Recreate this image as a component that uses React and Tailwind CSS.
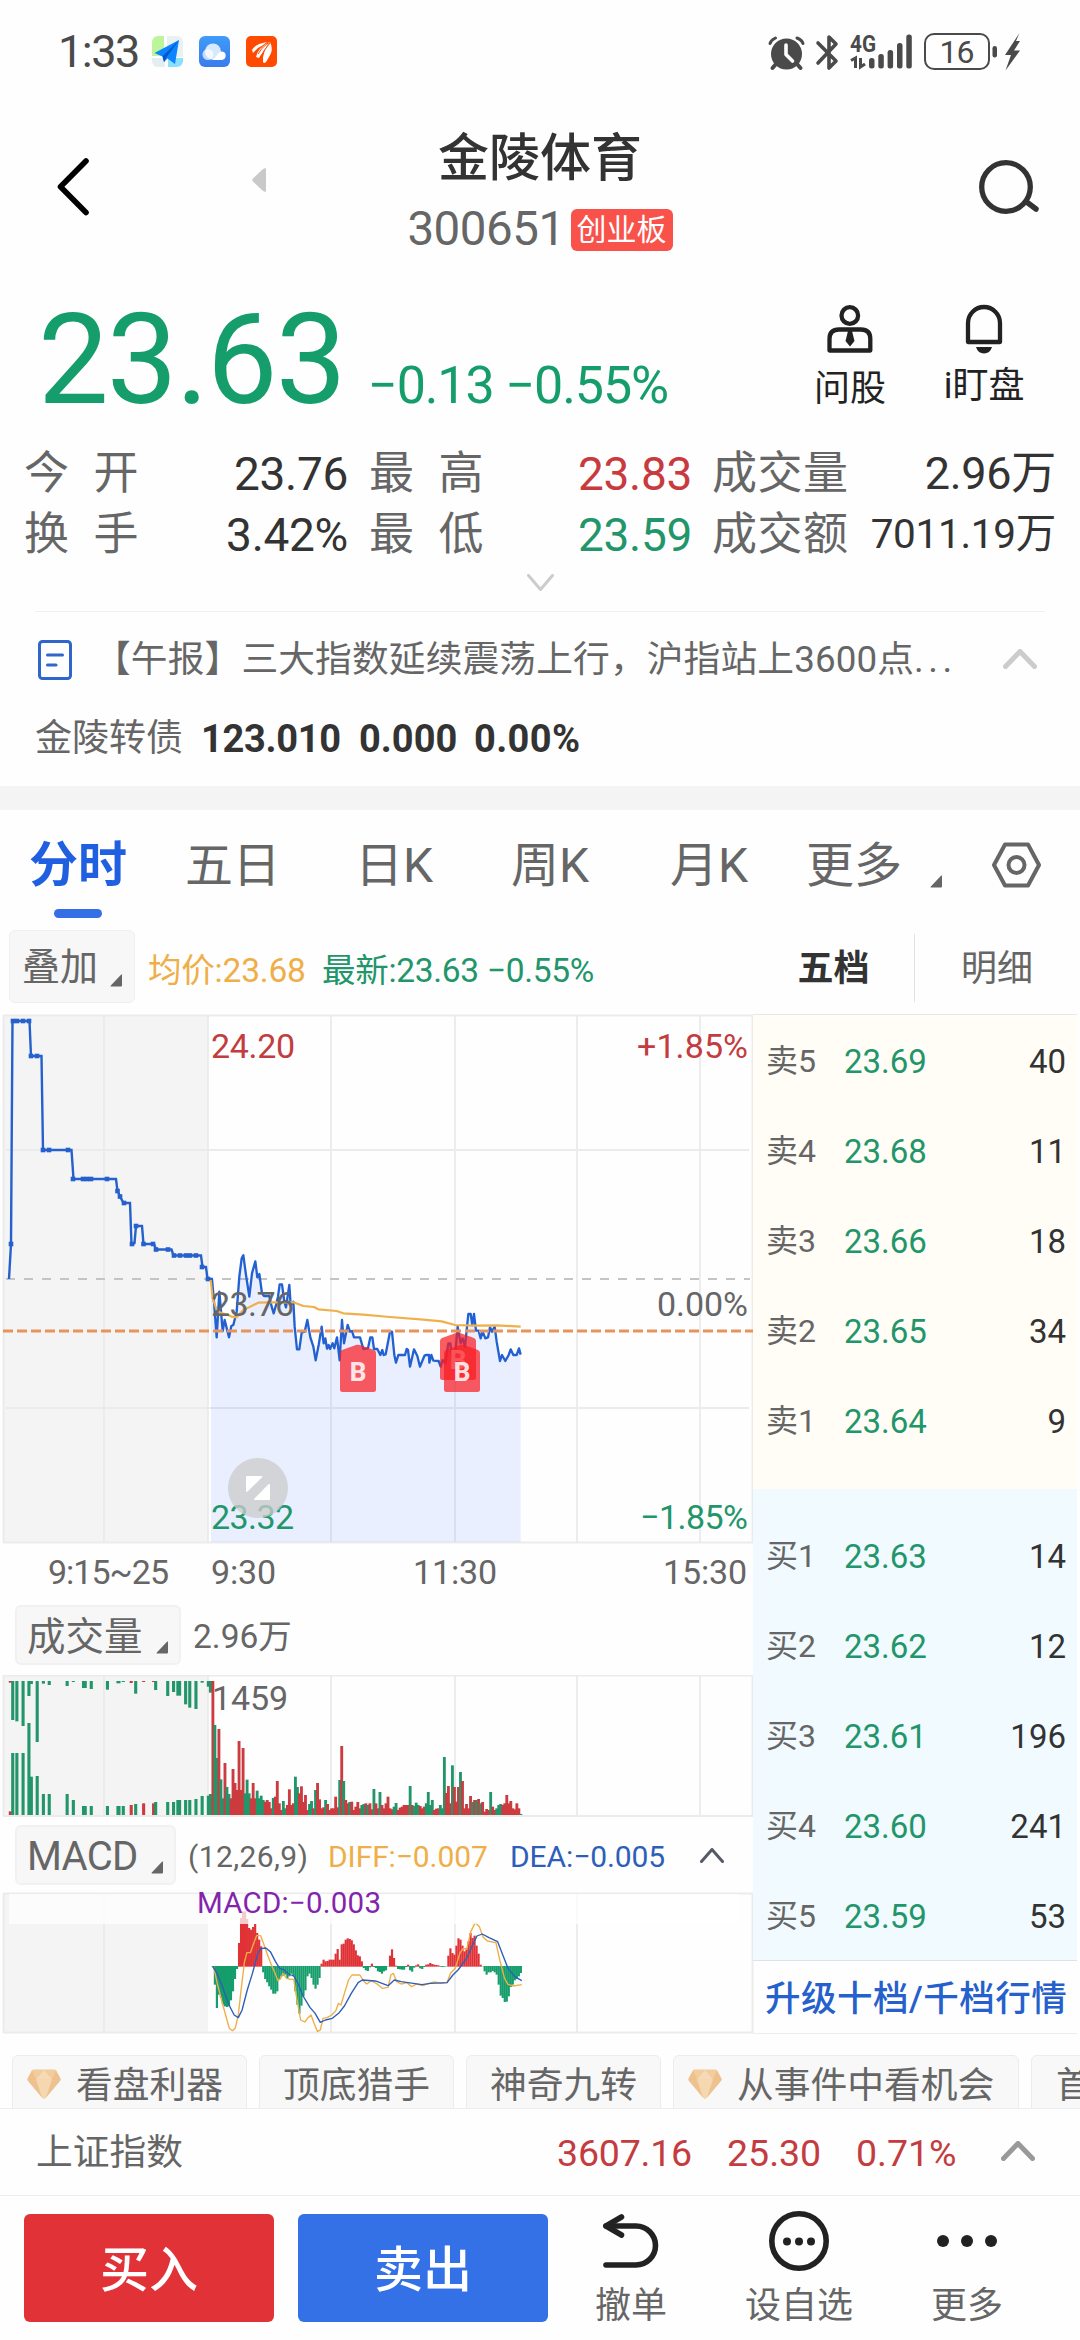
import React from "react";

const FONT = "font-[Roboto,'Noto_Sans_CJK_SC',sans-serif]";

const VOL_UP = "#cc3b3f";
const VOL_DOWN = "#22966a";

/* ---------- chart data ---------- */

const AUCTION =
  "9,1279 11,1244 12.5,1021 29.5,1021 31,1056 41.5,1056 43,1150 71.5,1150 73.5,1179 116,1179 117.5,1191 120,1196.5 123.5,1203 130,1203 131.5,1244 134.5,1243 136,1226 142,1226 143.5,1244 154,1244 156,1249.5 171.5,1249.5 173.5,1255.5 201,1255.5 202.5,1267 206,1267 207.5,1279 213,1279";

const AUCTION_DOTS = [
  [11, 1244], [13, 1021], [17, 1021], [23, 1021], [29, 1021], [31, 1056], [37, 1056], [43, 1150], [49, 1150], [68, 1150],
  [73, 1179], [83, 1179], [87, 1179], [91, 1179], [107, 1179], [117.5, 1191], [120, 1196.5], [124, 1203], [132, 1244],
  [136, 1226], [143.5, 1244], [153, 1244], [156, 1249.5], [168, 1249.5], [174, 1255.5], [180, 1255.5], [186, 1255.5],
  [190, 1255.5], [196, 1255.5], [202, 1267], [208, 1279],
];

const PRICE =
  "66,147 72,215 80,322 88,185 98,303 104,270 117,322 124,288 130,285 140,245 148,140 155,85 160,76 168,135 178,200 186,130 196,94 202,142 208,132 216,190 222,198 238,198 245,230 251,250 258,225 264,200 269,163 276,163 283,215 288,232 298,165 302,225 310,215 314,290 321,358 328,358 335,308 344,305 352,270 361,322 370,350 377,391 386,345 395,290 401,340 406,325 411,356 416,345 420,357 428,340 433,355 441,322 449,391 456,270 462,340 473,285 480,305 486,303 492,322 510,322 520,357 534,355 541,322 547,322 552,357 562,357 571,375 577,360 581,375 587,373 600,305 606,305 613,375 618,398 625,375 645,375 650,357 654,360 660,410 672,358 682,378 690,410 703,378 707,375 717,375 718,398 724,375 730,392 746,393 752,410 758,390 766,400 775,340 781,340 788,400 795,380 803,290 812,340 818,325 825,350 830,300 835,252 842,252 847,285 852,252 858,302 866,302 872,325 878,305 886,325 894,322 900,292 906,305 914,290 920,335 930,393 936,375 946,393 956,375 962,358 970,375 980,375 987,355 992,374";

const AVERAGE =
  "62,150 68,205 80,240 95,250 110,253 125,260 140,262 160,240 185,228 205,218 235,217 310,217 340,228 372,231 385,238 440,243 460,250 520,254 600,261 700,269 755,274 795,285 850,287 920,286 992,290";

/* [x, top bar end, bottom bar start, rising, width] */
const AUCTION_VOLUME = [
  [30, 278, 664, 1], [37, 390, 489], [49, 394, 489], [67, 408, 489], [84, 318, 399], [91, 282, 560], [108, 456, 558],
  [126, 281, 612], [143, 285, 612], [195, 288, 612], [213, 276, 630], [245, 294, 648, 0, 14], [265, 297, 648],
  [312, 299, 648], [344, 280, 648, 0, 12], [358, 276, 648], [381, 279, 645, 1], [394, 311, 642], [417, 276, 640, 1],
  [446, 276, 640, 1], [452, 300, 636], [487, 318, 636], [504, 306, 636], [519, 317, 630, 0, 14], [539, 343, 630],
  [551, 353, 630], [569, 357, 627], [587, 278, 618], [605, 290, 617], [611, 308, 612],
];

/* positive: rising minute, negative: falling minute */
const VOLUME = [
  402, -270, -171, 258, -107, -50, 156, -84, -63, 50, 138, 96, 75, 222, 75, 201, -65, -106, -65, 50, 96, 50, -73, -50, -58,
  -45, 40, 45, 39, 20, -51, 55, 102, 35, 15, -42, -20, 30, 77, 30, 35, -115, -84, 65, 86, 39, 60, 15, -33, -42, 20, -75, 96,
  47, 20, 23, -45, 33, 15, 20, 20, 55, 23, -105, 207, -102, 45, 35, -39, 40, 15, 25, 39, 20, -30, -33, 35, -30, 35, 17, -78,
  35, 20, -69, 30, 20, 35, 55, 20, 17, -25, -36, 15, 22, 25, 30, 30, 30, -87, 30, -27, -37, -30, 27, 20, 25, -35, -69, -30,
  -45, 15, 19, 20, -30, -20, -174, 66, 87, 35, -149, 84, 40, 84, -129, 102, 20, 33, 20, 57, -39, 45, -45, 48, -35, 39, 10, 18,
  15, -69, 25, 15, -20, -30, -33, 30, 35, 60, 35, 42, 20, 17, 35, 20, -3,
];

const HIST = [
  -3, -55, -125, -85, -95, -115, -120, -122, -120, -102, -75, -38, -8, 70, 145, 165, 165, 142, 115, 110, 118, 127, 100, 80, 60,
  -18, -38, -48, -60, -70, -82, -82, -75, -40, -30, -28, -25, -38, -30, -22, -30, -75, -115, -142, -118, -90, -72, -30, -22, -35,
  -55, -67, -55, -35, 8, 20, 15, 16, 20, 20, 20, 38, 52, 20, 66, 68, 80, 84, 82, 78, 66, 48, 33, 30, 15, -5, -12, -14, -3, 8, -2,
  -5, -15, -17, -22, -15, -12, 0, 32, 51, 25, 2, -8, -9, -10, -10, -2, 5, -12, -16, -4, 3, 6, -6, -8, -2, 5, 6, 10, 7, 5, 4, 3, -1,
  -2, -1, 0, 32, 54, 40, 35, 62, 84, 80, 62, 45, 55, 75, 100, 85, 92, 62, 38, 5, 0, -15, -25, -18, -18, -14, -18, -25, -55, -88,
  -95, -107, -106, -90, -62, -55, -42, -38, -30, -20,
];

const DIFF =
  "620,1129 632,1185 642,1225 655,1275 666,1315 675,1322 683,1315 692,1275 700,1200 710,1115 717,1088 727,1088 735,1065 745,1037 757,1037 765,1060 775,1090 788,1125 797,1145 807,1172 815,1165 822,1150 832,1165 843,1168 853,1168 860,1215 873,1290 885,1296 893,1285 903,1275 912,1300 922,1325 930,1320 938,1285 950,1283 963,1275 975,1262 983,1240 990,1245 1000,1210 1012,1170 1022,1155 1045,1155 1055,1172 1065,1182 1078,1172 1095,1182 1110,1195 1127,1192 1135,1155 1142,1150 1152,1175 1165,1182 1182,1178 1195,1190 1210,1182 1228,1187 1245,1180 1262,1176 1280,1180 1298,1178 1308,1150 1322,1135 1335,1090 1345,1075 1355,1078 1367,1025 1380,998 1392,1010 1402,1040 1415,1053 1440,1058 1450,1105 1465,1165 1475,1183 1490,1188 1515,1184";

const DEA =
  "618,1129 630,1150 645,1188 665,1245 680,1275 692,1283 703,1260 718,1200 733,1150 748,1092 757,1076 772,1074 785,1085 800,1115 812,1135 825,1140 838,1152 853,1158 865,1180 880,1218 900,1252 915,1270 930,1297 945,1290 965,1285 985,1268 1000,1248 1020,1210 1040,1178 1052,1170 1090,1173 1127,1187 1145,1170 1165,1175 1200,1180 1225,1184 1250,1180 1298,1178 1315,1155 1330,1140 1355,1105 1370,1070 1385,1038 1400,1032 1420,1043 1445,1055 1460,1095 1475,1135 1495,1160 1515,1172";

const SELLS = [["卖5", "23.69", "40"], ["卖4", "23.68", "11"], ["卖3", "23.66", "18"], ["卖2", "23.65", "34"], ["卖1", "23.64", "9"]];
const BUYS = [["买1", "23.63", "14"], ["买2", "23.62", "12"], ["买3", "23.61", "196"], ["买4", "23.60", "241"], ["买5", "23.59", "53"]];

/* ---------- small parts ---------- */

function Corner() {
  return (
    <svg width="13" height="13" viewBox="0 0 13 13" className="shrink-0">
      <path d="M12 0.5V11.5Q12 12.5 11 12.5H1Q0 12.3 0.8 11.4L11 0.8Q12 0 12.3 0.8Z" fill="#666" />
    </svg>
  );
}

function Chevron({ w, h, color, sw, down }) {
  const p = down ? `${sw / 2},${sw / 2} ${w / 2},${h - sw / 2} ${w - sw / 2},${sw / 2}` : `${sw / 2},${h - sw / 2} ${w / 2},${sw / 2} ${w - sw / 2},${h - sw / 2}`;
  return (
    <svg width={w} height={h} viewBox={`0 0 ${w} ${h}`} className="shrink-0">
      <polyline points={p} fill="none" stroke={color} strokeWidth={sw} strokeLinecap="round" strokeLinejoin="round" />
    </svg>
  );
}

function Gem() {
  return (
    <svg width="34" height="30" viewBox="0 0 34 30" className="shrink-0">
      <path d="M7 0.5H27Q28.5 0.5 29.3 1.8L33.3 9Q34 10.5 33 11.8L19 28.6Q17 30.8 15 28.6L1 11.8Q0 10.5 0.7 9L4.7 1.8Q5.5 0.5 7 0.5Z" fill="#f2cc9c" />
      <path d="M0.5 10.5H33.5L33 11.8L19 28.6Q17 30.8 15 28.6L1 11.8Z" fill="#f5d7b0" />
      <path d="M0.5 10.5L5 1.5L9 10.5L15 28.6L1 11.8Z" fill="#ebbd88" opacity=".8" />
      <path d="M33.5 10.5L29 1.5L25 10.5L19 28.6L33 11.8Z" fill="#ebbd88" opacity=".8" />
      <path d="M9 10.5L17 1L25 10.5Z" fill="#f6d9b6" />
    </svg>
  );
}

function Label({ x, y, w, size = 34, fill = "#666", children }) {
  return (
    <text x={x} y={y} textLength={w} fontSize={size} fill={fill}>
      {children}
    </text>
  );
}

function Marker({ x, y }) {
  return (
    <g>
      <path
        d={`M${x} ${y + 8.5}Q${x} ${y + 6.5} ${x + 2} ${y + 5.5}L${x + 16} ${y + 0.6}Q${x + 18} ${y - 0.3} ${x + 20} ${y + 0.6}L${x + 34} ${y + 5.5}Q${x + 36} ${y + 6.5} ${x + 36} ${y + 8.5}V${y + 45}Q${x + 36} ${y + 47.5} ${x + 33.5} ${y + 47.5}H${x + 2.5}Q${x} ${y + 47.5} ${x} ${y + 45}Z`}
        fill="#fa1d22"
        fillOpacity=".72"
      />
      <text x={x + 18} y={y + 36.5} textAnchor="middle" fontSize="26" fontWeight="800" fill="#fff" fillOpacity=".85">
        B
      </text>
    </g>
  );
}

/* ---------- sections ---------- */

function StatusBar() {
  return (
    <div className="flex h-[105px] items-center pr-[58px] pb-[2px] pl-[58px] text-[#4a4a4a]">
      <span className="w-[94px] text-[45px] leading-none tracking-[-1.500px]">1:33</span>
      <svg width="125" height="31" viewBox="0 0 125 31">
        <defs>
          <clipPath id="tile"><rect width="31" height="31" rx="6" /></clipPath>
          <linearGradient id="sky" x1="0" y1="0" x2="0" y2="1">
            <stop offset="0" stopColor="#3f9bf7" />
            <stop offset="1" stopColor="#3a7bee" />
          </linearGradient>
        </defs>
        <g clipPath="url(#tile)">
          <rect width="31" height="31" fill="#fff" />
          <rect width="12" height="20" fill="#bdf59a" />
          <rect x="15" width="16" height="21" fill="#e9f1f2" />
          <rect y="22" width="13" height="9" fill="#e4edf2" />
          <rect x="16" y="22" width="15" height="9" fill="#8de0fb" />
          <path d="M27 4L2.5 17L10.5 20.5L12 26L15.5 22.5L23 28Z" fill="#0a84ff" />
          <path d="M27 4L10.5 20.5L12 26L14 22Z" fill="#0556c4" />
        </g>
        <rect x="47" width="31" height="31" rx="6" fill="url(#sky)" />
        <g fill="#fff">
          <circle cx="61" cy="15.5" r="8" opacity=".8" />
          <circle cx="56" cy="18.5" r="5.5" opacity=".7" />
          <path d="M58 24Q62 24 65 19Q68 14 72 16A4.5 4.5 0 0 1 70 24Z" />
        </g>
        <rect x="94" width="31" height="31" rx="5" fill="#ff4a00" />
        <g fill="#fff">
          <path d="M100 14Q103 8 115 6Q110 10 106 12Q103 15 101 17Z" />
          <path d="M104 21Q106 12 117 6Q114 12 111 16Q108 20 107 22Z" />
          <path d="M111 26Q110 16 118 6Q122 14 117 21L114 26Q112 28 111 26Z" />
        </g>
        <path d="M106 18Q109 12 116 7M109 23Q111 14 118 7" stroke="#ff4a00" strokeWidth="1" fill="none" />
      </svg>
      <svg width="254" height="48" viewBox="768 27 254 48" className="ml-auto">
        <g fill="#4a4a4a">
          <circle cx="786.500" cy="53" r="15.500" />
          <path d="M776 63L772.500 67M797 63L800.500 67" stroke="#4a4a4a" strokeWidth="4" strokeLinecap="round" />
          <path d="M770 42.500Q771 39 775.500 37M803 42.500Q802 39 797 37" stroke="#4a4a4a" strokeWidth="3" strokeLinecap="round" fill="none" />
          <path d="M786 44V53.500L792.500 60" stroke="#fff" strokeWidth="3.600" strokeLinecap="round" strokeLinejoin="round" fill="none" />
        </g>
        <path d="M818 42L836 60L829 67V36L836 43L818 62" fill="none" stroke="#4a4a4a" strokeWidth="3.600" strokeLinejoin="round" strokeLinecap="round" />
        <text x="850" y="51" fontSize="23" fontWeight="700" fill="#4a4a4a" textLength="26" lengthAdjust="spacingAndGlyphs">4G</text>
        <path d="M851 59.500L855.500 57V67M860.500 57V66L865 63" fill="none" stroke="#4a4a4a" strokeWidth="3" />
        <g fill="#4a4a4a">
          <rect x="869" y="57" width="5.500" height="10.500" rx="2.500" />
          <rect x="878.300" y="53" width="5.500" height="14.500" rx="2.500" />
          <rect x="887.600" y="49" width="5.500" height="18.500" rx="2.500" />
          <rect x="897" y="42" width="5.500" height="25.500" rx="2.500" />
          <rect x="906.300" y="33.500" width="5.500" height="34" rx="2.500" />
          <rect x="992.500" y="45" width="4.500" height="11.500" rx="2.200" />
          <path d="M1019.500 32L1005 54H1011L1005.500 69.500L1020 49.500H1014L1020 40H1016Z" />
        </g>
        <rect x="925" y="33" width="64" height="35" rx="9" fill="none" stroke="#4a4a4a" strokeWidth="2" />
        <text x="939.500" y="62" fontSize="32" fill="#4a4a4a" textLength="35">16</text>
      </svg>
    </div>
  );
}

function Header() {
  return (
    <div className="flex h-[163px] items-center justify-between">
      <div className="flex w-[270px] items-center pl-[57px]">
        <svg width="34" height="60" viewBox="0 0 34 60">
          <polyline points="29,4 3.500,29.800 29,55.500" fill="none" stroke="#000" strokeWidth="5.600" strokeLinecap="round" strokeLinejoin="round" />
        </svg>
        <svg width="14" height="24" viewBox="0 0 14 24" className="mt-[-14px] ml-[161px]">
          <path d="M14 0V24L11 23L0.500 13Q0 12 0.500 11L11 1Z" fill="#c9c9c9" />
        </svg>
      </div>
      <div className="mt-[20px] flex flex-col items-center self-start">
        <div className="h-[64px] text-[51px] leading-[67px] font-medium text-[#333]">金陵体育</div>
        <div className="flex h-[82px] items-center gap-[6px]">
          <span className="text-[47.500px] leading-none tracking-[-0.500px] text-[#666]">300651</span>
          <span className="h-[42px] w-[102px] rounded-[6px] bg-[#f8524a] text-center text-[30px] leading-[42px] whitespace-nowrap text-white">创业板</span>
        </div>
      </div>
      <div className="flex w-[270px] justify-end pr-[41px]">
        <svg width="62" height="56" viewBox="976 158 62 56">
          <circle cx="1005" cy="186" r="24.300" fill="none" stroke="#333" strokeWidth="5.300" />
          <path d="M1025 200.500L1035 208" stroke="#333" strokeWidth="5.500" strokeLinecap="round" />
        </svg>
      </div>
    </div>
  );
}

function PriceBlock() {
  return (
    <div className="flex h-[175px] justify-between pr-[56px] pl-[38px]">
      <div className="mt-[29px] flex items-baseline self-start text-[#159e6b]">
        <span className="w-[330px] text-[126px] leading-none tracking-[-2px]">23.63</span>
        <span className="text-[52px] leading-none tracking-[-1.100px] whitespace-nowrap">−0.13 −0.55%</span>
      </div>
      <div className="mt-[35px] flex gap-[58px] text-[#222]">
        <div className="flex w-[72px] flex-col items-center">
          <svg width="46" height="52" viewBox="825 303 46 52">
            <circle cx="847.800" cy="315.500" r="8.300" fill="none" stroke="#222" strokeWidth="4.300" />
            <path d="M827.500 350.500V339Q827.500 329.500 837 329.500H859Q868.300 329.500 868.300 339V350.500Z" fill="none" stroke="#222" strokeWidth="4.300" strokeLinejoin="round" />
            <path d="M846 331H850L852.500 341L848 346.500L843.500 341Z" fill="#222" />
          </svg>
          <span className="mt-[12px] text-[36px] leading-[44px] whitespace-nowrap">问股</span>
        </div>
        <div className="flex w-[80px] flex-col items-center">
          <svg width="46" height="52" viewBox="959 303 46 52">
            <path d="M966 342V323A16 16 0 0 1 998 323V342Z" fill="none" stroke="#222" strokeWidth="4.300" strokeLinejoin="round" />
            <path d="M974 347H990Q988 353.500 982 353.500Q976 353.500 974 347Z" fill="#222" />
          </svg>
          <span className="mt-[9px] text-[36px] leading-[44px] whitespace-nowrap">i盯盘</span>
        </div>
      </div>
    </div>
  );
}

function StatRow({ a, av, b, bv, bc, c, cv, cs }) {
  return (
    <div className="flex h-[61px] items-center pl-[24px] text-[46px] leading-none tracking-[-0.300px] whitespace-nowrap">
      <span className="w-[122px] text-[45px] tracking-[24.500px] text-[#666]">{a}</span>
      <span className="w-[202px] text-right text-[#333]">{av}</span>
      <span className="ml-[21px] w-[140px] text-[45px] tracking-[24.500px] text-[#666]">{b}</span>
      <span className={"w-[183px] text-right " + bc}>{bv}</span>
      <span className="ml-[20px] w-[145px] text-[45px] tracking-[0.500px] text-[#666]">{c}</span>
      <span className={"w-[199px] text-right text-[#333] " + cs}>{cv}</span>
    </div>
  );
}

function News() {
  return (
    <>
      <div className="flex h-[46px] items-start justify-center pt-[9px]">
        <Chevron w={27} h={17} color="#ccc" sw={3} down />
      </div>
      <div className="mx-[35px] h-px bg-[#efefef]" />
      <div className="flex h-[94px] items-center pl-[37px]">
        <svg width="36" height="42" viewBox="0 0 36 42" className="mt-[2px]">
          <rect x="2.500" y="2.500" width="31" height="37" rx="3" fill="none" stroke="#2f66cc" strokeWidth="3" />
          <path d="M10.500 16H25.500M10.500 26H19" stroke="#2f66cc" strokeWidth="3" strokeLinecap="round" />
        </svg>
        <span className="mt-[2px] ml-[21px] w-[880px] text-[36.750px] leading-none tracking-[0.100px] whitespace-nowrap text-[#666]">
          【午报】三大指数延续震荡上行，沪指站上3600点<span className="tracking-[4.500px]">...</span>
        </span>
        <span className="ml-[29px]"><Chevron w={34} h={20} color="#ccc" sw={5} /></span>
      </div>
      <div className="flex h-[80px] items-start pl-[35px] text-[37px] leading-[66px] whitespace-nowrap">
        <span className="w-[166px] text-[#666]">金陵转债</span>
        <span className="w-[158px] text-[38px] font-bold tracking-[-0.300px] text-[#333]">123.010</span>
        <span className="w-[115px] text-[38px] font-bold text-[#333]">0.000</span>
        <span className="text-[38px] font-bold tracking-[0.400px] text-[#333]">0.00%</span>
      </div>
      <div className="h-[24px] bg-[#f4f4f4]" />
    </>
  );
}

function Tabs() {
  return (
    <div className="flex h-[109px] items-center text-[48px] leading-none whitespace-nowrap text-[#666]">
      <div className="relative flex h-full w-[156px] items-center justify-center pt-[2px] text-[49px] font-bold text-[#1f5fe0]">
        分时
        <span className="absolute bottom-[1px] left-[54px] h-[9px] w-[48px] rounded-full bg-[#346fe6]" />
      </div>
      <span className="mt-[2px] w-[153px] text-center tracking-[-0.500px]">五日</span>
      <span className="mt-[2px] w-[170px] text-center">日K</span>
      <span className="mt-[2px] w-[142px] text-center">周K</span>
      <span className="mt-[2px] w-[176px] text-center">月K</span>
      <span className="mt-[2px] ml-[9px] w-[124px]">更多</span>
      <span className="mt-[33px]"><Corner /></span>
      <svg width="51" height="46" viewBox="0 0 51 46" className="ml-[48px]">
        <path d="M14 2.500H37L48 23L37 43.500H14L3 23Z" fill="none" stroke="#666" strokeWidth="4" strokeLinejoin="round" />
        <circle cx="25.500" cy="23" r="8" fill="none" stroke="#666" strokeWidth="4" />
      </svg>
    </div>
  );
}

function InfoRow() {
  return (
    <div className="flex h-[95px] items-center pl-[9px] text-[33.500px] leading-none whitespace-nowrap">
      <div className="flex h-[73px] w-[126px] items-center rounded-[6px] border border-[#efefef] bg-[#f7f7f7] pl-[12px] text-[38px] text-[#666]">
        叠加
        <span className="mt-[28px] ml-[12px]"><Corner /></span>
      </div>
      <span className="mt-[8px] ml-[13px] w-[174px] tracking-[-0.200px] text-[#efae48]">均价:23.68</span>
      <span className="mt-[8px] w-[431px] tracking-[-0.300px] text-[#22966a]">最新:23.63 −0.55%</span>
      <div className="mt-[3px] flex h-[68px] w-[162px] items-center justify-center border-r border-[#e2e2e2] pt-[2px] text-[36px] font-bold text-[#333]">五档</div>
      <div className="mt-[3px] flex h-[68px] w-[164px] items-center justify-center pt-[2px] text-[36px] text-[#666]">明细</div>
    </div>
  );
}

function PriceChart() {
  return (
    <svg width="753" height="581" viewBox="0 1014 753 581" className="block">
      <rect x="3.500" y="1015" width="204.500" height="528" fill="#f4f4f5" />
      <g stroke="#ebebeb" strokeWidth="1.800">
        <path d="M3 1015.500H753M3 1542.500H753M6 1150H749M6 1408H749" />
        <path d="M3.500 1015V1543M104 1015V1543M208 1015V1543M331 1015V1543M455 1015V1543M577 1015V1543M700 1015V1543M752.500 1015V1543" />
      </g>
      <path d="M6 1279H750" stroke="#c4c4c4" strokeWidth="1.800" strokeDasharray="9 9" />
      <g transform="translate(190 1230) scale(.33333)">
        <polygon points={`63,147 ${PRICE} 992,936 63,936`} fill="#2f6bff" fillOpacity=".1" />
      </g>
      <polyline points={AUCTION} fill="none" stroke="#2660cc" strokeWidth="2.400" />
      {AUCTION_DOTS.map(([x, y], i) => (
        <rect key={i} x={x - 2.3} y={y - 2.3} width="4.600" height="4.600" fill="#2660cc" />
      ))}
      <g transform="translate(190 1230) scale(.33333)" fill="none">
        <polyline points={PRICE} stroke="#2360d2" strokeWidth="7" strokeLinejoin="round" />
        <polyline points={AVERAGE} stroke="#efb04c" strokeWidth="6.600" strokeLinejoin="round" />
      </g>
      <path d="M3 1331H753" stroke="#e8935c" strokeWidth="2.800" strokeDasharray="10 4" />
      <Label x={211} y={1058} w={84} fill="#c23c40">24.20</Label>
      <Label x={637} y={1058} w={111} fill="#c23c40">+1.85%</Label>
      <Label x={211} y={1316} w={83}>23.76</Label>
      <Label x={657} y={1316} w={91}>0.00%</Label>
      <Label x={211} y={1529} w={83} fill="#22966a">23.32</Label>
      <Label x={640} y={1529} w={108} fill="#22966a">−1.85%</Label>
      <Marker x={340} y={1344.5} />
      <Marker x={440} y={1332.5} />
      <Marker x={444} y={1344.5} />
      <circle cx="258" cy="1488" r="30" fill="#ccc" fillOpacity=".76" />
      <path d="M247 1476H261.500Q263 1476 262 1477.300L247.500 1491.500Q246 1492.500 246 1491V1477Q246 1476 247 1476Z" fill="#fff" />
      <path d="M269 1500H255Q253.500 1500 254.500 1498.500L268.500 1484.300Q270 1483.500 270 1485V1499Q270 1500 269 1500Z" fill="#fff" />
      <Label x={48} y={1584} w={121}>9:15~25</Label>
      <Label x={211} y={1584} w={65}>9:30</Label>
      <Label x={413} y={1584} w={84}>11:30</Label>
      <Label x={663} y={1584} w={84}>15:30</Label>
    </svg>
  );
}

function VolumeChart() {
  return (
    <svg width="753" height="142" viewBox="0 1675 753 142" className="block">
      <rect x="3.500" y="1675" width="204.500" height="141" fill="#f4f4f5" />
      <path
        d="M3 1675.500H753M3 1816H753M3.500 1675V1816M104 1675V1816M208 1675V1816M331 1675V1816M455 1675V1816M577 1675V1816M700 1675V1816M752.500 1675V1816"
        stroke="#ebebeb"
        strokeWidth="1.800"
      />
      <g transform="translate(0 1590) scale(.34439 .33333)">
        {AUCTION_VOLUME.map(([x, top, bottom, up, w = 9], i) => (
          <g key={i} fill={up ? VOL_UP : VOL_DOWN}>
            <rect x={x - w / 2} y={273} width={w} height={top - 273} />
            <rect x={x - w / 2} y={bottom} width={w} height={675 - bottom} />
          </g>
        ))}
        {VOLUME.map((v, i) => (
          <rect key={i} x={614 + i * 5.845} y={675 - Math.abs(v)} width="8.300" height={Math.abs(v)} fill={v > 0 ? VOL_UP : VOL_DOWN} />
        ))}
      </g>
      <Label x={212} y={1710} w={76}>1459</Label>
    </svg>
  );
}

function MacdChart() {
  return (
    <svg width="753" height="141" viewBox="0 1893 753 141" className="block overflow-visible">
      <rect x="3.500" y="1893" width="204.500" height="140" fill="#f4f4f4" />
      <path
        d="M3 1893.500H753M3 2032.500H753M3.500 1893V2033M104 1893V2033M331 1893V2033M455 1893V2033M577 1893V2033M752.500 1893V2033"
        stroke="#ebebeb"
        strokeWidth="1.800"
      />
      <g transform="translate(0 1590) scale(.34439 .33333)">
        {HIST.map((v, i) => (
          <rect key={i} x={615 + i * 5.845} y={v > 0 ? 1129 - v : 1128} width="6.300" height={Math.abs(v) + 1} fill={v > 0 ? "#e03236" : "#159e6b"} />
        ))}
        <polyline points={DIFF} fill="none" stroke="#efae48" strokeWidth="4" strokeLinejoin="round" />
        <polyline points={DEA} fill="none" stroke="#2d5fba" strokeWidth="4" strokeLinejoin="round" />
      </g>
      <rect x="9" y="1894" width="730" height="30" fill="#fff" fillOpacity=".75" />
      <Label x={197} y={1913} w={184} size={29.5} fill="#8424ad">MACD:−0.003</Label>
    </svg>
  );
}

function Indicators() {
  const box = "flex items-center rounded-[6px] border-2 border-[#f1f1f1] bg-[#f7f7f7] text-[38.500px] text-[#666]";
  return (
    <div className="w-[753px] leading-none whitespace-nowrap">
      <PriceChart />
      <div className="flex h-[80px] items-center pl-[15px]">
        <div className={box + " h-[60px] w-[166px] pl-[10px]"}>
          <span className="mt-[4px] w-[129px]">成交量</span><span className="mt-[25px]"><Corner /></span>
        </div>
        <span className="mt-[4px] ml-[12px] text-[33.500px] text-[#666]">2.96万</span>
      </div>
      <VolumeChart />
      <div className="flex h-[76px] items-center pl-[15px] text-[30px] tracking-[-0.100px]">
        <div className={box + " h-[60px] w-[161px] pl-[10px]"}>
          <span className="mt-[4px] w-[124px] text-[40px] tracking-[-0.700px]">MACD</span>
          <span className="mt-[25px]"><Corner /></span>
        </div>
        <span className="mt-[3px] ml-[12px] w-[140px] tracking-[0.400px] text-[#666]">(12,26,9)</span>
        <span className="mt-[3px] w-[182px] text-[#efae48]">DIFF:−0.007</span>
        <span className="mt-[3px] w-[190px] text-[#2d5fba]">DEA:−0.005</span>
        <Chevron w={24} h={15} color="#555b66" sw={3} />
      </div>
      <MacdChart />
    </div>
  );
}

function Quote({ row }) {
  return (
    <div className="flex h-[90px] items-center pr-[11px] pl-[13px] text-[33px] leading-none">
      <span className="w-[78px] text-[32px] text-[#666]">{row[0]}</span>
      <span className="text-[#22966a]">{row[1]}</span>
      <span className="ml-auto text-[#333]">{row[2]}</span>
    </div>
  );
}

function OrderBook() {
  return (
    <div className="w-[324px]">
      <div className="h-[475px] border-t border-[#e8e8e8] bg-[#fffdf6] pt-px">
        {SELLS.map((r) => <Quote key={r[0]} row={r} />)}
      </div>
      <div className="h-[472px] border-b border-[#dfe3e5] bg-[#f1fafe] pt-[22px]">
        {BUYS.map((r) => <Quote key={r[0]} row={r} />)}
      </div>
      <div className="flex h-[73px] items-center border-b border-[#ededed] pt-[5px] pl-[12px] text-[35.500px] leading-none font-medium tracking-[0.500px] whitespace-nowrap text-[#2560cc]">
        升级十档/千档行情
      </div>
    </div>
  );
}

function Chips() {
  const chip = "flex h-[70px] shrink-0 items-start rounded-[6px] border border-[#ececec] bg-[#f8f8f8] pt-px text-[36.750px] leading-[58px] text-[#666]";
  return (
    <div className="h-[75px] overflow-hidden border-b border-[#ededed] pt-[21px] pl-[12px] whitespace-nowrap">
      <div className="flex gap-[12px]">
        <div className={chip + " w-[235px] pl-[14px]"}><span className="mt-[12px] mr-[15px]"><Gem /></span>看盘利器</div>
        <div className={chip + " w-[195px] justify-center"}>顶底猎手</div>
        <div className={chip + " w-[195px] justify-center"}>神奇九转</div>
        <div className={chip + " w-[346px] pl-[14px]"}><span className="mt-[12px] mr-[15px]"><Gem /></span>从事件中看机会</div>
        <div className={chip + " w-[195px] pl-[24px]"}>首</div>
      </div>
    </div>
  );
}

function IndexRow() {
  return (
    <div className="flex h-[87px] items-center border-b border-[#ededed] pt-[3px] pl-[36px] text-[37.500px] leading-none whitespace-nowrap text-[#c43c40]">
      <span className="w-[521px] text-[36.750px] text-[#666]">上证指数</span>
      <span className="w-[170px] tracking-[-0.200px]">3607.16</span>
      <span className="w-[129px]">25.30</span>
      <span className="w-[145px]">0.71%</span>
      <span className="mt-[-6px]"><Chevron w={34} h={20} color="#999" sw={5} /></span>
    </div>
  );
}

function Actions() {
  const btn = "flex h-[108px] w-[250px] items-center justify-center rounded-[6px] pt-[4px] text-[49px] leading-none font-medium text-white";
  const label = "text-[36px] leading-[44px] whitespace-nowrap text-[#666]";
  return (
    <div className="flex h-[144px] pt-[18px] pl-[24px]">
      <div className={btn + " bg-[#e03237]"}>买入</div>
      <div className={btn + " ml-[24px] bg-[#3470e6]"}>卖出</div>
      <div className="ml-[23px] flex w-[120px] flex-col items-center">
        <svg width="60" height="60" viewBox="602 2212 60 60" className="mt-[-2px]">
          <path d="M607 2226H637A19.500 19.500 0 0 1 637 2265H607" fill="none" stroke="#222" strokeWidth="5.600" strokeLinecap="round" />
          <path d="M622.500 2217L607 2226L622.500 2235" fill="none" stroke="#222" strokeWidth="5.600" strokeLinecap="round" strokeLinejoin="round" />
        </svg>
        <span className={label + " mt-[12px]"}>撤单</span>
      </div>
      <div className="ml-[48px] flex w-[120px] flex-col items-center">
        <svg width="62" height="62" viewBox="767 2210 62 62" className="mt-[-4px]">
          <circle cx="798" cy="2241" r="27.200" fill="none" stroke="#222" strokeWidth="5.600" />
          <circle cx="786" cy="2241.500" r="4" fill="#222" />
          <circle cx="798" cy="2241.500" r="4" fill="#222" />
          <circle cx="810" cy="2241.500" r="4" fill="#222" />
        </svg>
        <span className={label + " mt-[12px]"}>设自选</span>
      </div>
      <div className="ml-[48px] flex w-[120px] flex-col items-center">
        <svg width="62" height="62" viewBox="935 2210 62 62" className="mt-[-4px]">
          <circle cx="942" cy="2241" r="6" fill="#222" />
          <circle cx="966" cy="2241" r="6" fill="#222" />
          <circle cx="990" cy="2241" r="6" fill="#222" />
        </svg>
        <span className={label + " mt-[12px]"}>更多</span>
      </div>
    </div>
  );
}

export default function App() {
  return (
    <div className={"h-[2340px] w-[1080px] overflow-hidden bg-[#fefefe] " + FONT}>
      <StatusBar />
      <Header />
      <PriceBlock />
      <StatRow a="今开" av="23.76" b="最高" bv="23.83" bc="text-[#c93a3e]" c="成交量" cv="2.96万" cs="text-[45px]" />
      <StatRow a="换手" av="3.42%" b="最低" bv="23.59" bc="text-[#22966a]" c="成交额" cv="7011.19万" cs="text-[40.500px]" />
      <News />
      <Tabs />
      <InfoRow />
      <div className="flex h-[1020px]">
        <Indicators />
        <OrderBook />
      </div>
      <Chips />
      <IndexRow />
      <Actions />
    </div>
  );
}
